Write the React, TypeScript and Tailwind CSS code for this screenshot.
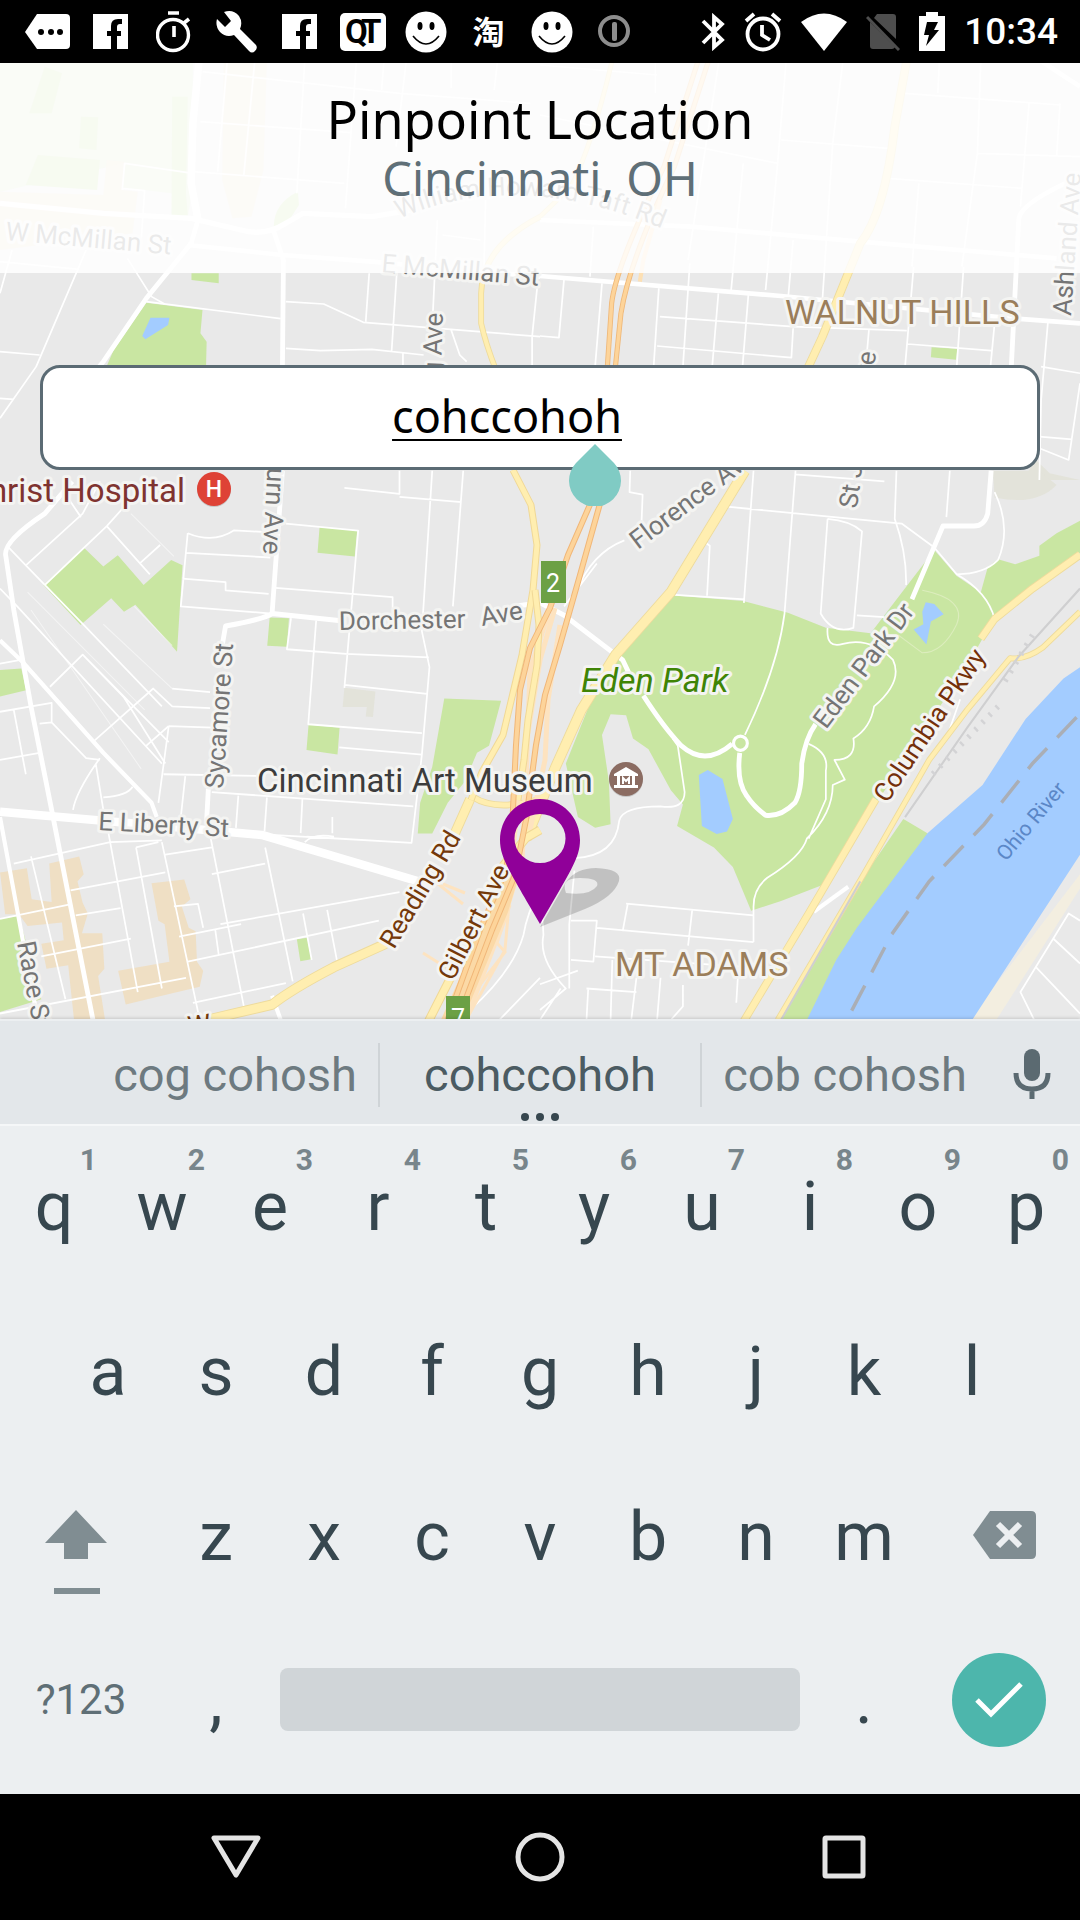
import React from "react";

const PARK = "#c9e6a2";
const WATER = "#a3ccff";
const SHOP = "#efdfc4";

/* Each quadrant of the map is digitised on its own grid and scaled into place. */
const NW = "translate(0 60) scale(0.3444 0.3333)";
const NE = "translate(540 60) scale(0.3444 0.3333)";
const SW = "translate(0 460) scale(0.3444 0.3571)";
const SE = "translate(540 460) scale(0.3444 0.3571)";

function Areas() {
  return (
    <g>
      <g transform={NW}>
        <path fill={PARK} d="M0 0H560V380L545 470H500V400L420 390L355 385L360 310L0 395Z" opacity="0.45" />
        <path fill={PARK} d="M235 170L285 172L280 270L230 265ZM110 285L290 300L282 390L75 375ZM130 20L180 40L150 160L85 160ZM500 110H545L540 400L545 465L498 470Z" />
        <path fill={SHOP} d="M310 300L360 305L355 390L400 395L385 520L0 570V395L300 405ZM650 0H775L765 330L730 470L675 475L645 360Z" opacity="0.8" />
        <path fill={PARK} d="M865 395L868 435L840 480L795 500Q795 430 865 395ZM556 640H635V670L556 660Z" />
        <path fill={PARK} d="M425 728L588 750L582 820L600 845L598 930H305L330 870Z" />
        <path fill={WATER} d="M437 773L492 773L488 795L422 838L413 828Z" />
      </g>
      <g transform={NE}>
        <path fill={PARK} d="M1137 862L1212 866L1208 899L1135 892Z" />
        <path fill="#e3e3da" d="M1440 1200L1480 1240L1568 1260H1400Z" />
      </g>
      <g transform={SW}>
        <path fill={PARK} d="M243 245L300 298L342 267L417 350L497 280L530 295L514 537L393 405L360 425L323 387L234 462L126 350Z" />
        <path fill={PARK} d="M928 187L1037 198L1030 270L922 260ZM783 441L839 443L833 523L776 520ZM0 588L62 584L76 645L0 662ZM896 741L986 750L980 825L890 812ZM1290 668L1455 674L1420 800L1385 820L1350 900L1300 960L1255 1046H1213L1220 960L1255 860ZM0 1285L55 1277L120 1510L0 1546ZM862 1342L892 1338L904 1398L872 1404Z" />
        <path fill="#e3e3da" d="M1000 638L1090 648L1083 720L1062 718L1065 692L995 692Z" />
        <path fill={SHOP} d="M0 1155L78 1143L92 1230L150 1238L143 1130L230 1110L243 1160L225 1180L240 1240L255 1270L238 1325L297 1325L303 1425L285 1445L305 1568H215L198 1415L135 1425L120 1355L185 1345L180 1295L80 1305L55 1272H15ZM440 1185L535 1175L553 1230L528 1250L548 1310L568 1320L572 1405L590 1430L580 1475L470 1500L365 1525L343 1430L492 1405L478 1300L460 1290Z" />
      </g>
      <g transform={SE}>
        <path fill={PARK} d="M370 378L590 395L720 428L830 470L960 485L1145 252L1210 325L1280 370L1300 300L1330 278L1380 292L1450 268V240L1500 205L1568 170V260L1320 440L1250 560L820 1190L700 1235L613 1262L560 1140L505 1085L398 1025L415 965L380 925L315 810L270 780L250 715L205 712L180 770L200 900L205 1020L160 1030L110 1000L75 850L150 670L240 540Z" />
        <path fill={PARK} d="M1055 1005L1125 1045L1130 1060L785 1568H690L930 1180Z" />
        <path fill="#e3e3da" d="M1315 30H1450L1500 70Q1440 130 1320 105Z" />
        <path fill="#f3eee0" d="M1568 1160L1568 1200L1325 1568H1245Z" />
        <path fill={WATER} d="M1568 580L1520 612L1410 725L1285 910L1125 1045L920 1310L860 1400L775 1568H1255L1568 1105Z" />
        <path fill={WATER} d="M487 868L530 893L560 1005L543 1040L513 1047L470 1025L461 882ZM1120 398L1145 403L1172 432L1135 452L1122 517L1085 475L1113 460L1110 425Z" />
        <path fill="none" stroke="#aaaeb5" strokeWidth="10" strokeDasharray="80 42" d="M905 1542L1020 1330L1130 1180L1290 1020L1430 850L1568 710" />
      </g>
    </g>
  );
}

function MinorRoads() {
  return (
    <g fill="none" stroke="#fff" strokeWidth="5" strokeLinejoin="round">
      <g transform={NW}>
        <path d="M588 35L1160 100L1540 130M582 185L1020 218M560 335L1000 370M660 0L632 335M740 0L708 345M885 0L862 400M1035 0L1003 445M1115 0L1108 90M1180 0L1150 260M1310 0V85M1445 0L1435 90M355 390L362 310L560 340M355 385L420 392L410 540" />
        <path d="M35 570L0 700M250 570L105 920L0 1075M370 595L440 710L478 732M0 605L230 628M0 875L115 885M0 1015L40 1018" />
        <path d="M425 725L815 776M830 725L940 732L1055 787L1568 830M1072 640L1062 785M1152 640L1137 875M1270 480L1255 800M830 865L930 872L1080 868L1230 885M1310 810L1335 885L1355 905M1560 680L1545 830V920M1170 880V920M1410 420L1405 640M1285 525L1395 540" />
      </g>
      <g transform={NE}>
        <path d="M0 15L340 45M0 165L690 310M700 240L1010 265M1060 100L1510 135M1010 355L1400 385M1270 280L1568 290M335 0V100M520 0L430 600M715 0L690 310L655 690M880 0L850 250L820 720M1160 0L1155 100M1280 0L1270 280L1225 620M1100 370L1080 620M1420 130L1395 440M1510 130L1500 290M590 310L555 690M155 500L145 650M70 655L55 833L0 828M180 670L160 920M345 685L330 920M435 610L415 920M518 700L500 920M605 705L588 920M735 540L720 720M348 770L735 800M340 858L730 893L735 805M735 800L1065 812M955 810L950 870M1085 620L1060 920M1230 620L1210 920M1320 790L1308 920M1068 852L1310 872M1475 785L1455 1020L1450 1260M1455 920L1568 940M1450 1130L1545 1138M1568 970L1535 1200L1450 1165" />
      </g>
      <g transform={SW}>
        <path d="M20 240L75 295L243 462L470 690M75 295L240 150L290 60M130 350L310 185L380 110M310 185L435 320M405 290L465 238M200 110L235 160M0 360L50 410L470 850M145 635L240 545L490 790M275 785L445 640L500 690L610 695M500 640L610 650M425 800L490 745M240 545L360 665L480 850M0 705L150 680V735L115 738M150 735L250 835L290 840M0 840L115 820M0 570L60 560M40 700L75 880M278 850L300 980M290 835Q220 930 212 980M300 945Q370 940 385 915" />
        <path strokeOpacity="0.5" strokeWidth="3" d="M80 370L420 700M390 410L500 520M300 460L500 640M90 420L410 865M380 150L505 270" />
        <path d="M545 205Q620 235 680 197L790 203M545 205L525 410L790 430M540 260L785 273M530 332L655 342V365L780 375M830 178L1040 198L1000 638M800 358L1140 384V430M1000 78L1160 95V30M1160 103L1340 118M1255 30L1225 480L1247 580L1225 825L1195 1072L890 1055M1345 30L1315 410M845 443L833 530L1005 543L1245 553M918 450L895 740L1225 765M1000 630L1240 655M985 805L1225 825M490 745L640 750M490 745L460 960M475 880L770 885M615 930L1200 970M692 940L685 1030M775 945L768 1040M878 950L873 1045M965 1000V1045M538 885L525 1000M610 1040L1195 1072M885 1070Q910 1045 970 1055" />
        <path d="M40 1130L320 1070L470 1065M480 1105L615 1085M315 1045L400 1490M395 1085L470 1480M395 1085L460 1070M610 1050L708 1530M470 1070L580 1568M770 1085L850 1460M205 1205L480 1155M220 1275L350 1255M615 1160L770 1130M505 1250L575 1243L590 1310M520 1335L700 1300M0 1285L200 1245M90 1110L190 1510M0 1550L540 1450M120 1390L380 1340M545 1405L1100 1290M640 1300L1160 1210M880 1270L905 1400M950 1260L978 1400M560 1520L830 1465M625 1315L635 1385" />
        <path d="M1568 1200Q1530 1270 1520 1330Q1490 1430 1365 1540M1568 1450L1450 1568" />
      </g>
      <g transform={SE}>
        <path d="M262 30L260 90L298 97L295 170M620 30L592 400M742 30L710 430Q690 580 595 770M535 130L1050 178L1145 245M740 40L1000 60M1035 30L1030 165Q1065 260 1063 350M1190 30L1180 160M470 225L493 240L485 380M370 376L595 390M835 165L815 430Q850 490 910 470L935 200Q900 170 835 165M920 435L1000 440M1320 90Q1370 190 1330 280Q1290 320 1210 320M1145 245L1210 320Q1300 370 1320 445M835 470Q830 530 880 515Q960 495 1025 560Q1055 620 970 690Q960 750 910 780Q920 840 855 840L885 895L850 910Q850 990 775 1060Q760 1110 660 1170Q620 1200 620 1250V1350M780 795Q840 820 830 870V950L780 1060M1180 780L1220 670M105 370Q150 260 245 225M70 410L165 290" />
        <path d="M385 780L400 800L420 930Q420 980 350 970Q240 970 230 1010Q220 1110 100 1115M100 1150L85 1300V1480M0 1140L10 1330Q-5 1400 75 1480L0 1540M250 1242L620 1275M255 1242L240 1320M442 1260L430 1360M165 1310L620 1350M90 1290H165L155 1405L90 1400M0 1468L110 1430M160 1390L600 1420M135 1480L280 1490M210 1400L205 1568M280 1450L265 1568M350 1450L340 1568M415 1470V1530L380 1568M575 1440L570 1520M140 1480L135 1568M0 1568L60 1480" />
        <path d="M1568 1290L1535 1270L1395 1490L1435 1568M1440 1420L1568 1550M1490 1340L1568 1410" />
        <path stroke="#dcedbd" strokeWidth="3" d="M1110 365Q1240 390 1210 460Q1170 540 1110 540L1040 490" />
      </g>
    </g>
  );
}

function MajorRoads() {
  return (
    <g fill="none" stroke="#fff" strokeLinejoin="round">
      <g transform={NW}>
        <path strokeWidth="22" d="M578 0L560 190L555 370L575 480" />
        <path strokeWidth="16" d="M0 430L300 460L555 475L700 510Q770 530 830 490L880 460L1080 470Q1140 460 1200 450" />
        <path strokeWidth="14" d="M575 480L555 550L425 715L300 905L280 930M545 555L820 585L1080 605L1568 650M795 515L823 600L820 930" />
      </g>
      <g transform={NE}>
        <path strokeWidth="14" d="M0 648L700 708L1370 775L1568 790M0 480L440 500L930 545L1500 595M1450 0L1568 80M1568 350Q1390 430 1390 480L1368 930" />
      </g>
      <g transform={SW}>
        <path strokeWidth="14" d="M210 60L130 150Q5 230 17 270L40 420L90 690L150 980L270 1568M820 30L790 430L990 450M790 430Q770 445 655 465L645 520M605 920L600 1010M1490 410L1568 400" />
        <path strokeWidth="12" d="M0 505L65 565L300 820L440 960L455 1000M0 1000L75 1390L110 1568M790 1500L815 1568" />
        <path strokeWidth="24" d="M0 985L300 1010L760 1050L1215 1180" />
      </g>
      <g transform={SE}>
        <path strokeWidth="14" d="M1310 30L1300 150Q1290 185 1260 185H1170L1080 390M1000 480L940 560M800 740Q770 780 760 850Q760 930 740 960Q700 1000 655 995Q620 970 600 940Q570 900 580 820M558 795Q480 860 410 800Q360 750 300 660M0 400L70 435L240 560L260 600" />
        <path strokeWidth="12" d="M795 1265L895 1195" />
        <circle cx="582" cy="793" r="20" fill={PARK} strokeWidth="9" />
      </g>
    </g>
  );
}

function RoadPair({ d, width, edgeWidth, fill, edge }: { d: string; width: number; edgeWidth: number; fill: string; edge: string }) {
  return (
    <g fill="none" strokeLinejoin="round">
      <path d={d} stroke={edge} strokeWidth={width + edgeWidth} />
      <path d={d} stroke={fill} strokeWidth={width} />
    </g>
  );
}

function Highways() {
  const yellow = { fill: "#ffeeb0", edge: "#eedb9c", edgeWidth: 5 };
  const orange = { fill: "#fdd49a", edge: "#efb879", edgeWidth: 5 };
  return (
    <g>
      <g transform={NW}>
        <RoadPair {...yellow} width={12} d="M1568 470Q1400 560 1397 700V790Q1410 850 1440 930" />
      </g>
      <g transform={NE}>
        <RoadPair {...yellow} width={9} d="M210 0Q150 260 90 380L0 470" />
        <RoadPair {...yellow} width={20} d="M1065 0L1030 200Q1000 460 930 550L820 830L775 930" />
        <RoadPair {...orange} width={10} d="M460 0L360 320Q220 620 208 730L195 930" />
        <RoadPair {...orange} width={10} d="M490 0L390 320Q260 600 235 760L218 930" />
        <path d="M350 420L300 600L290 665" stroke="#fde0b4" strokeWidth="12" fill="none" />
      </g>
      <g transform={SW}>
        <RoadPair {...yellow} width={24} d="M1365 950L1300 1090M1120 1355L970 1420Q850 1480 790 1525L600 1568" />
        <RoadPair {...yellow} width={14} d="M1375 945Q1440 985 1568 950" />
      </g>
      <g transform={SE}>
        <RoadPair {...yellow} width={26} d="M595 30L380 370L220 545L120 700L45 860L-40 1060" />
        <RoadPair {...yellow} width={18} d="M1568 265L1430 360L1320 445L1280 500M975 950L780 1270L580 1590" />
        <RoadPair {...yellow} width={12} d="M1568 425L1460 525Q1410 560 1365 555L1240 700L1130 840L940 1160L690 1568" />
        <path fill="none" stroke="#cfcfd0" strokeWidth="6" d="M1568 360L1390 550L1240 750L1060 1000M930 1180L700 1568" />
        <path fill="none" stroke="#d3d3d5" strokeWidth="16" strokeDasharray="7 22" d="M1430 490L1350 620M1330 690L1130 890" />
      </g>
      <Interchange />
    </g>
  );
}

/* The freeway bundle between the exit 2 and exit 7 ramps. */
function Interchange() {
  const yellow = { fill: "#ffeeb0", edge: "#f0d896", edgeWidth: 2 };
  const orange = { fill: "#fdd49a", edge: "#f0b678", edgeWidth: 2 };
  return (
    <g>
      <g fill="none" stroke="#fde3c0" strokeWidth="5">
        <path d="M555 608L540 660L520 780L512 860L480 930L448 1030M548 615L530 670L526 780L522 860L500 930L462 1030M560 625L548 700L545 760L530 830" />
        <path strokeWidth="3" d="M437 883L463 904M443 884L465 893M510 905L497 943L505 952L470 998M423 953L450 970M512 870L505 950L455 1040" />
      </g>
      <path fill="#fbd9a6" d="M506 868L520 872L508 912L462 1022H440L484 924Z" />
      <RoadPair {...yellow} width={5} d="M513 470L531 505L537 545L533 590L522 655L503 735L482 772L471 800" />
      <RoadPair {...yellow} width={5} d="M535 590L539 625L537 665L528 720L524 760L518 800" />
      <RoadPair {...yellow} width={7} d="M540 830L526 838L498 872M452 975L424 1030" />
      <RoadPair {...orange} width={4} d="M592 500L568 555L550 608L530 648L520 690L516 745L512 830L506 870L480 930L444 1030" />
      <RoadPair {...orange} width={4} d="M601 500L580 575L560 645L545 695L536 745L526 820L515 875L492 930L454 1030" />
    </g>
  );
}

type LabelProps = { x: number; y: number; turn?: number; size?: number; fill?: string; anchor?: "start" | "end"; italic?: boolean; children: string };

function MapLabel({ x, y, turn = 0, size = 26, fill = "#757575", anchor = "start", italic = false, children }: LabelProps) {
  return (
    <text
      transform={`translate(${x} ${y}) rotate(${turn})`}
      fontSize={size}
      fill={fill}
      textAnchor={anchor}
      fontStyle={italic ? "italic" : "normal"}
      stroke="#f4f4f2"
      strokeWidth="6"
      strokeLinejoin="round"
      paintOrder="stroke"
    >
      {children}
    </text>
  );
}

function CityMap() {
  return (
    <svg className="absolute inset-0 h-full w-full font-['Roboto',sans-serif]" viewBox="0 63 1080 956" preserveAspectRatio="xMidYMin slice" role="img" aria-label="Map of Cincinnati">
      <rect y="0" width="1080" height="1100" fill="#e9e9e9" />
      <Areas />
      <MinorRoads />
      <MajorRoads />
      <Highways />

      <MapLabel x={5} y={240} turn={5}>W McMillan St</MapLabel>
      <MapLabel x={381} y={272} turn={5}>E McMillan St</MapLabel>
      <path id="taft" d="M399 219Q520 165 675 234" fill="none" />
      <text fontSize="26" fill="#757575" stroke="#f4f4f2" strokeWidth="5" paintOrder="stroke">
        <textPath href="#taft">William Howard Taft Rd</textPath>
      </text>
      <MapLabel x={443} y={313} turn={-88} anchor="end">Young Ave</MapLabel>
      <MapLabel x={1071} y={316} turn={-86}>Ashland Ave</MapLabel>
      <MapLabel x={785} y={324} size={34} fill="#9b7e5a">WALNUT HILLS</MapLabel>
      <MapLabel x={857} y={509} turn={-83}>St James Ave</MapLabel>
      <MapLabel x={185} y={502} size={33} fill="#7f3330" anchor="end">Christ Hospital</MapLabel>
      <MapLabel x={263} y={554} turn={93} anchor="end">Auburn Ave</MapLabel>
      <MapLabel x={638} y={550} turn={-37}>Florence Ave</MapLabel>
      <MapLabel x={339} y={630} turn={-1}>Dorchester</MapLabel>
      <MapLabel x={482} y={626} turn={-10}>Ave</MapLabel>
      <MapLabel x={223} y={789} turn={-86}>Sycamore St</MapLabel>
      <MapLabel x={98} y={830} turn={3}>E Liberty St</MapLabel>
      <MapLabel x={17} y={943} turn={79}>Race St</MapLabel>
      <MapLabel x={394} y={950} turn={-59} fill="#74390a">Reading Rd</MapLabel>
      <MapLabel x={453} y={982} turn={-63} fill="#74390a">Gilbert Ave</MapLabel>
      <MapLabel x={826} y={730} turn={-53}>Eden Park Dr</MapLabel>
      <MapLabel x={887} y={804} turn={-56} fill="#74300a">Columbia Pkwy</MapLabel>
      <MapLabel x={581} y={692} size={34} fill="#3f8405" italic>Eden Park</MapLabel>
      <MapLabel x={257} y={792} size={33} fill="#3c3c3c">Cincinnati Art Museum</MapLabel>
      <MapLabel x={615} y={976} size={34} fill="#9b7e5a">MT ADAMS</MapLabel>
      <MapLabel x={189} y={1035} turn={-8} fill="#74390a">W</MapLabel>
      <text transform="translate(1006 862) rotate(-50)" fontSize="21" fill="#5b87c7">Ohio River</text>

      <rect x="541" y="561" width="25" height="42" fill="#6ca045" />
      <text x="553" y="592" fontSize="25" textAnchor="middle" fill="#fff">2</text>
      <rect x="446" y="996" width="24" height="42" fill="#6ca045" />
      <text x="458" y="1027" fontSize="25" textAnchor="middle" fill="#fff">7</text>

      <circle cx="214" cy="490" r="17" fill="#c5c5c5" />
      <circle cx="214" cy="489" r="17" fill="#de4236" />
      <text x="214" y="497" fontSize="23" fontWeight="500" textAnchor="middle" fill="#fff">H</text>

      <circle cx="626" cy="780" r="17" fill="#c5c5c5" />
      <circle cx="626" cy="779" r="17" fill="#8b6c62" />
      <path fill="#fff" fillRule="evenodd" d="M626 767L638 774V776H635V785H638V788H614V785H617V776H614V774ZM620 776V785H632V776Z" />
      <path fill="none" stroke="#fff" strokeWidth="2" d="M623 784V778L626 781L629 778V784" />

      <path fill="#000" fillOpacity="0.17" fillRule="evenodd" d="M540 927L566 882Q576 868 596 868Q622 869 619 881Q614 897 585 909ZM566 893Q560 878 580 878Q600 878 597 886Q590 896 566 893Z" />
      <path fill="#900099" fillRule="evenodd" d="M540 799C562 799 580 817 580 840C580 858 570 872 540 924C510 872 500 858 500 840C500 817 518 799 540 799ZM540 814A25 24 0 1 0 540 863A25 24 0 1 0 540 814Z" />
    </svg>
  );
}

function FacebookIcon() {
  return (
    <svg width="35" height="35" viewBox="0 0 35 35">
      <path fill="#fff" d="M0 0H35V35H24V22H28V17H24V13Q24 10 27 10H29V5H25Q18 5 18 12V17H14V22H18V35H0Z" />
    </svg>
  );
}

function SmileIcon() {
  return (
    <svg width="42" height="42" viewBox="0 0 42 42">
      <circle cx="21" cy="21" r="20.5" fill="#fff" />
      <ellipse cx="15" cy="15" rx="2.5" ry="4" />
      <ellipse cx="27" cy="15" rx="2.5" ry="4" />
      <path d="M8 25Q21 41 34 25" fill="none" stroke="#000" strokeWidth="1.6" />
    </svg>
  );
}

function StatusBar() {
  const notifications = [
    <svg width="45" height="35" viewBox="0 0 45 35"><path fill="#fff" d="M12 0H41Q45 0 45 4V31Q45 35 41 35H12L0 18Z" /><circle cx="16" cy="18" r="3" /><circle cx="26" cy="18" r="3" /><circle cx="35" cy="18" r="3" /></svg>,
    <FacebookIcon />,
    <svg width="36" height="42" viewBox="0 0 36 42"><g fill="none" stroke="#fff"><circle cx="17" cy="24" r="15.5" strokeWidth="3.4" /><path strokeWidth="3.6" d="M12 2H23M18 15V26M28 12L33 8" /></g></svg>,
    <svg width="43" height="43" viewBox="0 0 43 43"><path fill="#fff" d="M2 9L10 17L16 11L9 2Q18 -1 24 6Q28 12 25 19L41 35Q43 38 40 41Q37 44 34 41L19 25Q11 28 5 22Q0 16 2 9Z" /></svg>,
    <FacebookIcon />,
    <svg width="46" height="38" viewBox="0 0 46 38" className="font-['Roboto',sans-serif] font-bold">
      <rect width="46" height="38" rx="5" fill="#fff" />
      <text x="5" y="30" fontSize="33">Q</text>
      <text x="21" y="30" fontSize="33">T</text>
    </svg>,
    <SmileIcon />,
    <span className="pb-1 font-['Noto_Sans_CJK_SC',sans-serif] text-[32px] leading-10 font-bold text-white">淘</span>,
    <SmileIcon />,
    <svg width="33" height="33" viewBox="0 0 33 33"><circle cx="16" cy="16" r="14" fill="none" stroke="#8d8d8d" strokeWidth="4" /><rect x="14" y="7" width="5" height="19" rx="2" fill="#8d8d8d" /></svg>,
  ];
  return (
    <header className="flex h-[63px] items-center justify-between bg-black pr-[22px] pl-4 font-['Roboto',sans-serif]">
      <div className="flex items-center">
        {notifications.map((icon, i) => (
          <span key={i} className="flex w-[63px] justify-center">{icon}</span>
        ))}
      </div>
      <div className="flex items-center gap-[19px]">
        <svg width="24" height="38" viewBox="0 0 24 38"><path fill="none" stroke="#fff" strokeWidth="3.8" d="M2 8L21 27L13 34V4L21 11L2 30" /></svg>
        <svg width="38" height="40" viewBox="0 0 38 40"><g fill="none" stroke="#fff"><circle cx="19" cy="22" r="15.500" strokeWidth="3.8" /><path strokeWidth="3.800" d="M18 13V23L26 28M2 9L10 2M36 9L28 2" /></g></svg>
        <svg width="46" height="38" viewBox="0 0 46 38"><path fill="#fff" d="M0 9Q23 -8 46 9L23 38Z" /></svg>
        <svg width="34" height="38" viewBox="0 0 34 38"><path fill="#4e4e4e" d="M11 1H27Q30 1 30 4V26L8 5ZM4 9L29 34Q28 36 26 36H7Q4 36 4 33Z" /><path stroke="#4e4e4e" strokeWidth="3" d="M1 4L33 37" /></svg>
        <svg width="26" height="39" viewBox="0 0 26 39"><path fill="#fff" d="M7 0H19V4H26V39H0V4H7Z" /><path d="M8 10H19L15 18H20L7 34L10 23H5Z" /></svg>
        <time className="text-[37px] leading-[44px] font-medium text-white">10:34</time>
      </div>
    </header>
  );
}

function SuggestionBar() {
  return (
    <div className="grid h-[105px] grid-cols-[92px_1fr_324px_1fr_92px] items-center border-t-2 border-[#eceff1] bg-[#e3e7ea] pt-1 text-[47px] leading-[54px] text-[#6d7a80]">
      <span />
      <button type="button">cog cohosh</button>
      <button type="button" className="relative h-16 border-x-2 border-[#cfd4d7] text-[#4b5b62]">
        cohccohoh
        <span className="absolute inset-x-0 -bottom-3.5 flex justify-center gap-[7px]">
          <i className="size-2 rounded-full bg-[#37474f]" />
          <i className="size-2 rounded-full bg-[#37474f]" />
          <i className="size-2 rounded-full bg-[#37474f]" />
        </span>
      </button>
      <button type="button">cob cohosh</button>
      <button type="button" aria-label="Voice input" className="flex justify-center pr-1">
        <svg width="38" height="52" viewBox="0 0 38 52">
          <rect x="11" y="0" width="16" height="32" rx="8" fill="#5b6a71" />
          <path d="M3 24Q3 40 19 40Q35 40 35 24M19 40V50" fill="none" stroke="#5b6a71" strokeWidth="5" />
        </svg>
      </button>
    </div>
  );
}

function Key({ label, hint }: { label: string; hint?: string }) {
  return (
    <button type="button" className="relative flex h-[165px] w-1/10 items-center justify-center pb-1">
      {hint && <span className="absolute top-4 right-[11px] text-[30px] leading-9 font-bold text-[#78858b]">{hint}</span>}
      {label}
    </button>
  );
}

function Keyboard() {
  return (
    <section aria-label="Keyboard" className="relative bg-[#eceff1] font-['Roboto',sans-serif] text-[#37474f] shadow-[0_-1px_3px_rgba(0,0,0,0.15)]">
      <SuggestionBar />
      <div className="border-t-2 border-[#f5f7f8] pb-2 text-[68px] leading-20">
        <div className="flex">
          {[..."qwertyuiop"].map((k, i) => (
            <Key key={k} label={k} hint={String((i + 1) % 10)} />
          ))}
        </div>
        <div className="flex justify-center">
          {[..."asdfghjkl"].map((k) => (
            <Key key={k} label={k} />
          ))}
        </div>
        <div className="flex">
          <button type="button" aria-label="Shift" className="flex w-[15%] items-center justify-center pt-7 pr-2.5">
            <svg width="62" height="86" viewBox="0 0 62 86" fill="#808d92">
              <path d="M31 0L62 33H43V49H19V33H0ZM9 78H55V84H9Z" />
            </svg>
          </button>
          {[..."zxcvbnm"].map((k) => (
            <Key key={k} label={k} />
          ))}
          <button type="button" aria-label="Delete" className="flex w-[15%] items-center justify-center pb-2 pl-2.5">
            <svg width="63" height="48" viewBox="0 0 63 48">
              <path fill="#808d92" d="M17 0H58Q63 0 63 5V43Q63 48 58 48H17L0 24Z" />
              <path d="M25 13L47 35M47 13L25 35" stroke="#eceff1" strokeWidth="6" />
            </svg>
          </button>
        </div>
        <div className="flex h-[165px] items-center pb-2">
          <button type="button" className="w-[15%] text-[42px] leading-12 text-[#5f6f76]">?123</button>
          <button type="button" className="w-1/10">,</button>
          <div className="flex-1 px-[10px]">
            <button type="button" aria-label="Space" className="block h-[63px] w-full rounded-lg bg-[#d0d5d8]" />
          </div>
          <button type="button" className="w-1/10">.</button>
          <div className="flex w-[15%] justify-center">
            <button type="button" aria-label="Done" className="flex size-[94px] items-center justify-center rounded-full bg-[#4db6ac]">
              <svg width="48" height="36" viewBox="0 0 48 36"><path d="M2 18L16 32L46 2" fill="none" stroke="#fff" strokeWidth="5" /></svg>
            </button>
          </div>
        </div>
      </div>
    </section>
  );
}

function NavBar() {
  return (
    <nav className="flex h-[126px] items-center justify-center gap-[254px] bg-black">
      <button type="button" aria-label="Back"><svg width="50" height="50" viewBox="0 0 50 50"><path d="M3 6H47L25 43Z" fill="none" stroke="#e4e4e4" strokeWidth="5" strokeLinejoin="round" /></svg></button>
      <button type="button" aria-label="Home"><svg width="50" height="50" viewBox="0 0 50 50"><circle cx="25" cy="25" r="22" fill="none" stroke="#e4e4e4" strokeWidth="5" /></svg></button>
      <button type="button" aria-label="Recents"><svg width="50" height="50" viewBox="0 0 50 50"><rect x="6" y="6" width="38" height="38" rx="1" fill="none" stroke="#e4e4e4" strokeWidth="5" /></svg></button>
    </nav>
  );
}

export default function App() {
  return (
    <div className="flex min-h-screen flex-col bg-[#eceff1]">
      <StatusBar />
      <main className="relative flex-1 overflow-hidden font-['Noto_Sans',sans-serif]">
        <CityMap />
        <div className="relative flex h-[210px] flex-col items-center bg-white/85 pt-[22px] text-center">
          <h1 className="text-[52px] leading-[68px] text-black">Pinpoint Location</h1>
          <p className="text-[47px] leading-[50px] text-[#5f6f77]">Cincinnati, OH</p>
        </div>
        <div className="relative mx-10 mt-[92px]">
          <input
            aria-label="Location"
            defaultValue="cohccohoh"
            className="block h-[105px] w-full rounded-[20px] border-[3px] border-[#5b6b74] bg-white pr-[66px] pb-1 text-center text-[45px] text-black underline decoration-2 underline-offset-6 outline-none"
          />
          <svg className="absolute top-[79px] left-1/2 ml-[29px]" width="52" height="62" viewBox="0 0 52 62">
            <path d="M26 0L45 19A26 26 0 1 1 7 19Z" fill="#80cbc4" />
          </svg>
        </div>
      </main>
      <Keyboard />
      <NavBar />
    </div>
  );
}
